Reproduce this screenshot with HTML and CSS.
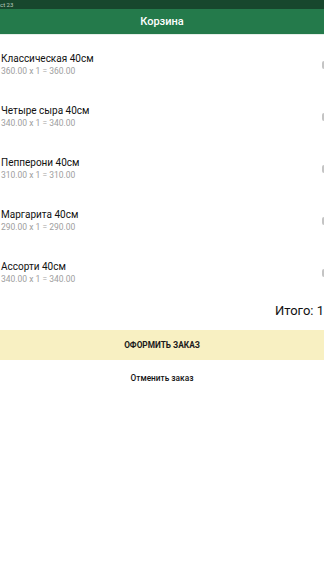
FILE: index.html
```html
<!DOCTYPE html>
<html lang="ru">
<head>
<meta charset="utf-8">
<link rel="stylesheet" href="styles.css">
</head>
<body>
<div class="status">ct 23</div>
<header class="bar">Корзина</header>
<main class="content">
  <ul class="list">
    <li class="item"><div class="info"><div class="name">Классическая 40см</div><div class="price">360.00 x 1 = 360.00</div></div><span class="ctrl"></span></li>
    <li class="item"><div class="info"><div class="name">Четыре сыра 40см</div><div class="price">340.00 x 1 = 340.00</div></div><span class="ctrl"></span></li>
    <li class="item"><div class="info"><div class="name">Пепперони 40см</div><div class="price">310.00 x 1 = 310.00</div></div><span class="ctrl"></span></li>
    <li class="item"><div class="info"><div class="name">Маргарита 40см</div><div class="price">290.00 x 1 = 290.00</div></div><span class="ctrl"></span></li>
    <li class="item"><div class="info"><div class="name">Ассорти 40см</div><div class="price">340.00 x 1 = 340.00</div></div><span class="ctrl"></span></li>
  </ul>
  <div class="total">Итого: 1</div>
  <button class="order">ОФОРМИТЬ ЗАКАЗ</button>
  <button class="cancel">Отменить заказ</button>
</main>
</body>
</html>
```
FILE: styles.css
```css
html, body {
  margin: 0;
  padding: 0;
  background: #ffffff;
  font-family: Roboto, "Noto Sans", sans-serif;
  overflow: hidden;
}
.status {
  height: 9px;
  background: #17472d;
  color: #b9cbbf;
  font-size: 6px;
  line-height: 9px;
  overflow: hidden;
  white-space: nowrap;
}
.bar {
  height: 25px;
  background: #247a4b;
  color: #ffffff;
  font-size: 11px;
  font-weight: 500;
  line-height: 26px;
  text-align: center;
  border-bottom: 1px solid #e6efe9;
}
.content {
  display: flex;
  flex-direction: column;
}
.list {
  list-style: none;
  margin: 0;
  padding: 17px 0 0 0;
  display: flex;
  flex-direction: column;
  gap: 27px;
}
.item {
  height: 25px;
  display: flex;
  justify-content: space-between;
  align-items: flex-start;
  padding-left: 1px;
}
.name {
  font-size: 10px;
  color: #111111;
  line-height: 14px;
}
.price {
  font-size: 8.5px;
  color: #9e9e9e;
  line-height: 11px;
}
.ctrl {
  width: 2px;
  height: 8px;
  margin-top: 9px;
  background: #c4c4c4;
  border-radius: 3px 0 0 3px;
}
.total {
  text-align: right;
  font-size: 13px;
  color: #111111;
  margin-top: 16px;
  height: 20px;
  line-height: 20px;
  margin-right: 0;
}
.order {
  margin-top: 9px;
  height: 30px;
  border: 0;
  background: #f8f0c2;
  color: #1a1a1a;
  font-family: Roboto, "Noto Sans", sans-serif;
  font-size: 8.3px;
  font-weight: 700;
  width: 100%;
}
.cancel {
  margin-top: 6px;
  height: 24px;
  border: 0;
  background: transparent;
  color: #111111;
  font-family: Roboto, "Noto Sans", sans-serif;
  font-size: 8.3px;
  font-weight: 500;
  width: 100%;
}
```
